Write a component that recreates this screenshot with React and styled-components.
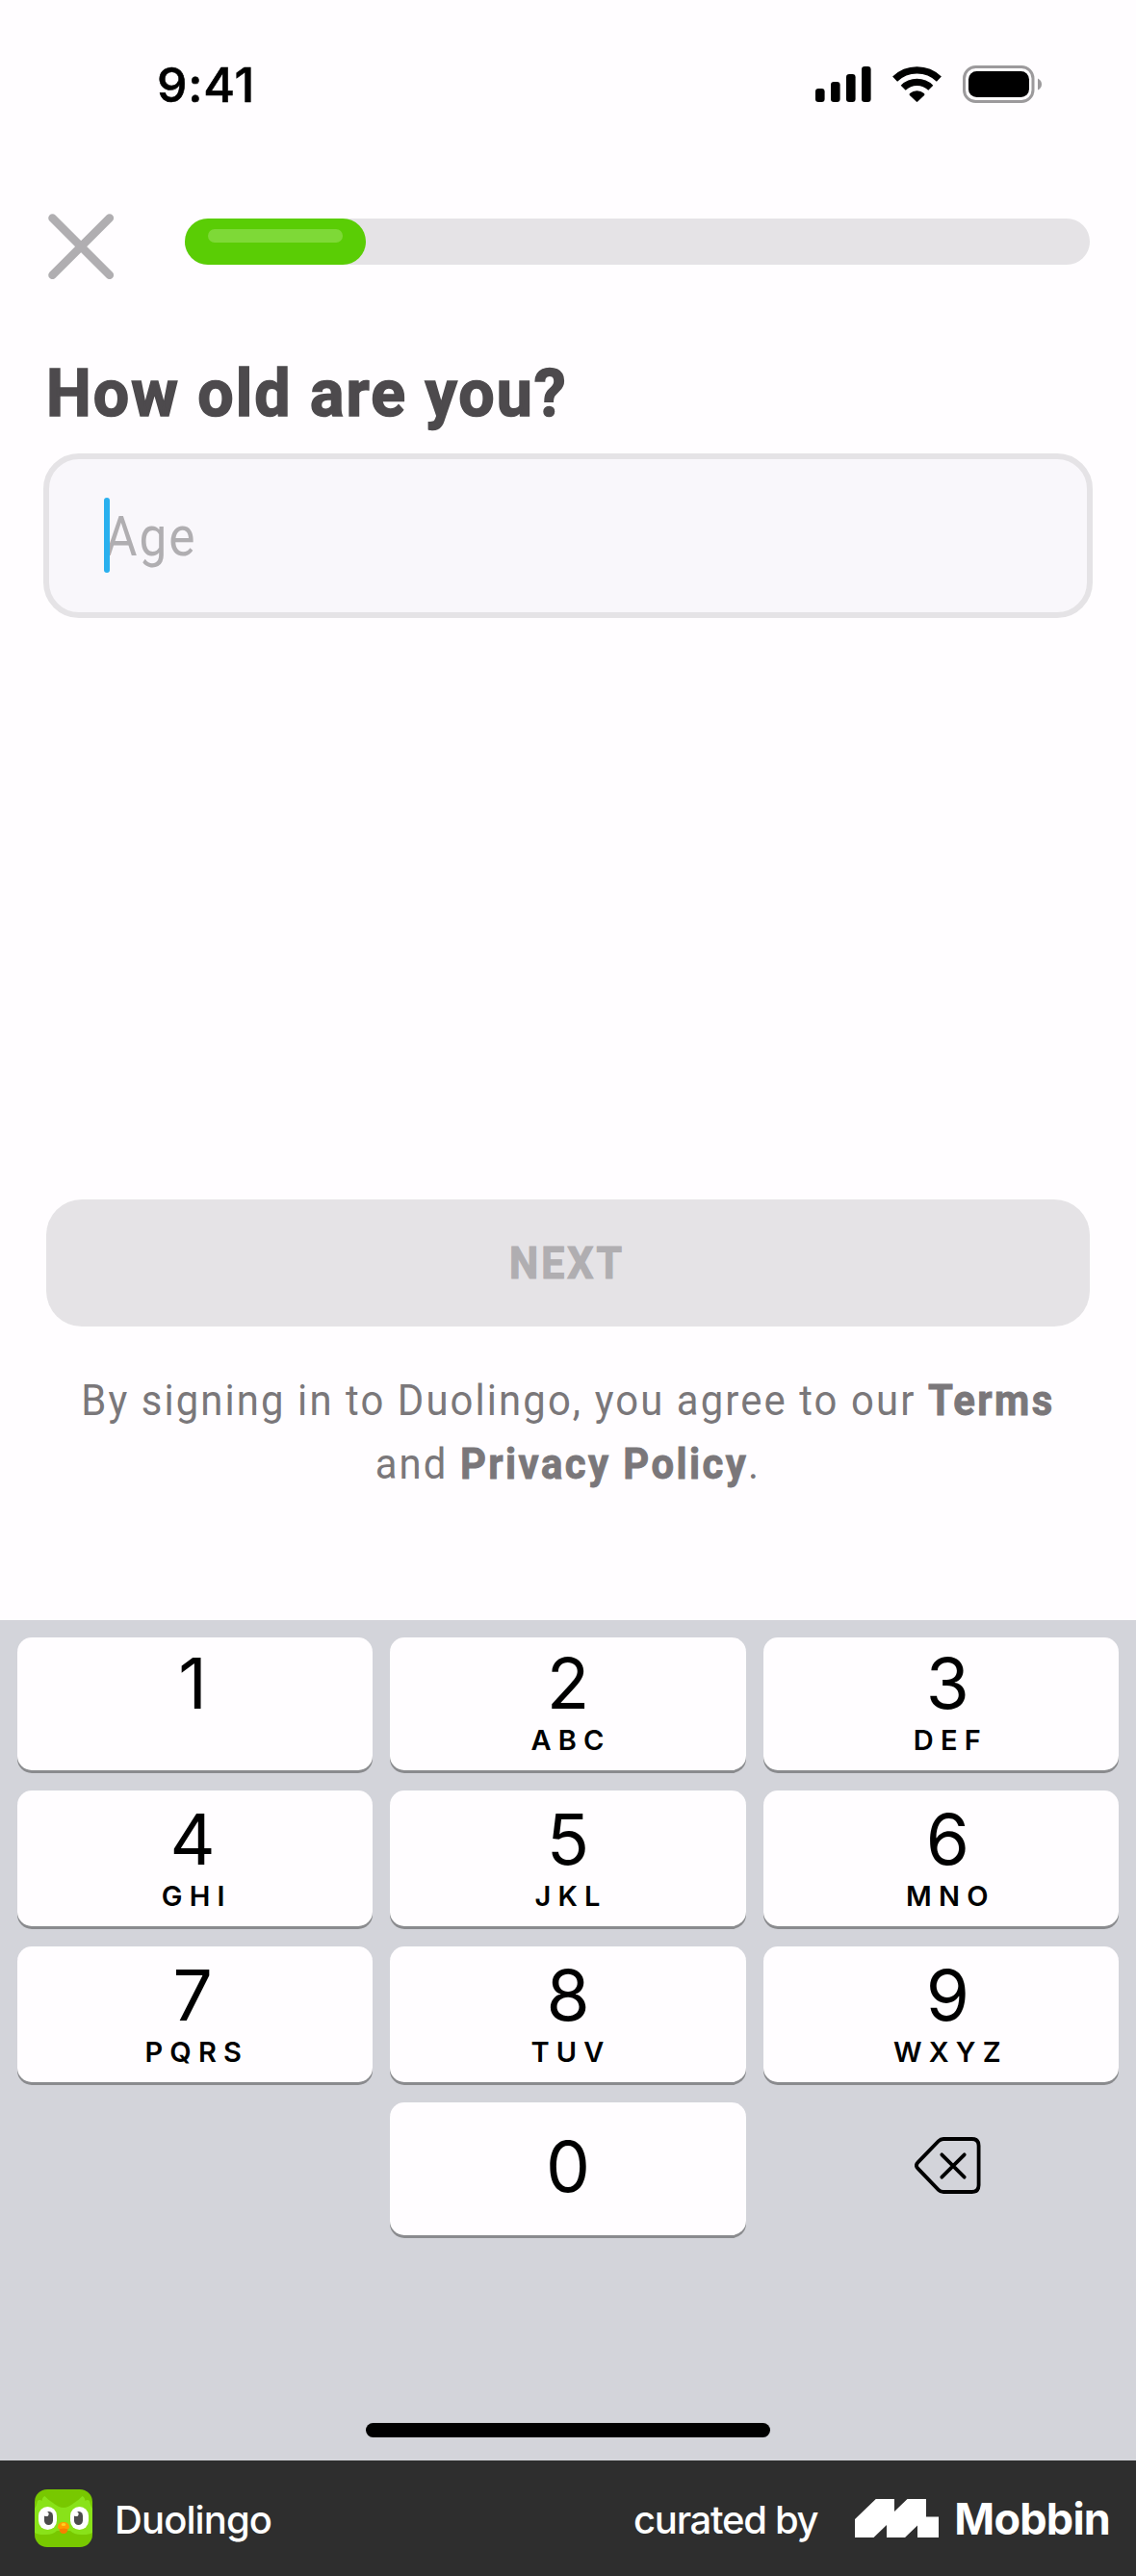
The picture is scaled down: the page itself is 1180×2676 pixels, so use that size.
import React from "react";
import styled, { createGlobalStyle, css } from "styled-components";

const GlobalStyle = createGlobalStyle`
  * { box-sizing: border-box; }
  body { margin: 0; background: #fffdff; }
`;

/* Slightly narrowed, widely tracked face used for all in-app copy */
const narrowed = css`
  font-family: Roboto, sans-serif;
  transform: scaleX(${(p) => p.$stretch || 0.93});
`;

const Page = styled.div`
  width: 1180px;
  height: 2676px;
  display: flex;
  flex-direction: column;
  overflow: hidden;
  background: #fffdff;
  font-family: Inter, sans-serif;
  color: #000;
`;

/* Status bar */
const StatusBar = styled.header`
  height: 222px;
  padding: 58px 98px 0 163px;
  display: flex;
  justify-content: space-between;
  align-items: flex-start;
`;

const Clock = styled.time`
  font-size: 50px;
  font-weight: 500;
  line-height: 60px;
  letter-spacing: 0.8px;
  -webkit-text-stroke: 0.6px #000;
`;

const StatusIcons = styled.div`
  display: flex;
  gap: 22px;
  padding-top: 10px;
`;

/* Progress header */
const ProgressHeader = styled.div`
  height: 146px;
  padding: 0 48px 0 50px;
  display: flex;
  align-items: flex-start;
  gap: 74px;
`;

const IconButton = styled.button`
  display: flex;
  padding: 0;
  border: 0;
  background: none;
`;

const Track = styled.div`
  flex: 1;
  height: 48px;
  margin-top: 5px;
  border-radius: 24px;
  background: #e5e3e6;
`;

const Fill = styled.div`
  width: ${(p) => p.$value}%;
  height: 100%;
  padding: 11px 24px;
  border-radius: 24px;
  background: #5acd05;
`;

const Shine = styled.div`
  height: 14px;
  border-radius: 7px;
  background: #7ed937;
`;

/* Form */
const Form = styled.main`
  flex: 1;
  padding: 0 45px 129px;
  display: flex;
  flex-direction: column;
`;

const Title = styled.h1`
  ${narrowed}
  transform-origin: left;
  margin: 0 3px 22px;
  font-size: 69px;
  font-weight: 700;
  line-height: 81px;
  letter-spacing: 2.1px;
  color: #4d4a4d;
  -webkit-text-stroke: 1.6px #4d4a4d;
`;

const Field = styled.div`
  height: 171px;
  padding: 2px 57px 0;
  display: flex;
  align-items: center;
  border: 6px solid #e5e3e6;
  border-radius: 37px;
  background: #f9f7fb;
`;

const Caret = styled.span`
  position: relative;
  z-index: 1;
  width: 6px;
  height: 78px;
  margin-bottom: 4px;
  border-radius: 3px;
  background: #2ab0ee;
`;

const Placeholder = styled.span`
  ${narrowed}
  transform-origin: left;
  margin-left: -5px;
  font-size: 57px;
  line-height: 67px;
  letter-spacing: 2.2px;
  color: #b0aeb1;
`;

const NextButton = styled.button`
  height: 132px;
  margin: auto 3px 44px;
  padding: 0 2px 0 0;
  border: 0;
  border-radius: 37px;
  background: #e5e3e6;
  color: #b0aeb1;
`;

const ButtonLabel = styled.span`
  ${narrowed}
  display: block;
  font-size: 46px;
  font-weight: 700;
  line-height: 54px;
  letter-spacing: 3.2px;
  -webkit-text-stroke: 1.2px #b0aeb1;
`;

const Legal = styled.p`
  ${narrowed}
  margin: 0 -20px;
  text-align: center;
  font-size: 45px;
  line-height: 66px;
  letter-spacing: 2.25px;
  color: #7a777a;
  white-space: nowrap;
`;

const LegalLink = styled.a`
  font-weight: 700;
  letter-spacing: 2.6px;
  -webkit-text-stroke: 0.9px #7a777a;
`;

/* Keypad */
const Keyboard = styled.section`
  height: 873px;
  padding: 18px 18px 24px;
  display: flex;
  flex-direction: column;
  justify-content: space-between;
  align-items: center;
  background: #d3d4da;
`;

const Keys = styled.div`
  width: 100%;
  display: grid;
  grid-template-columns: repeat(3, 1fr);
  grid-template-rows: 138px 141px 141px 138px;
  column-gap: 18px;
  row-gap: 21px;
`;

const KeyCap = styled.button`
  grid-column: ${(p) => p.$col};
  grid-row: ${(p) => p.$row};
  display: flex;
  flex-direction: column;
  align-items: center;
  justify-content: flex-start;
  padding: ${(p) => [3, 6, 6, 22][p.$row - 1]}px 0 0;
  border: 0;
  border-radius: 15px;
  background: #fffdff;
  box-shadow: 0 3px 0 #8a8b8e;
  color: #000;
  font-family: Inter, sans-serif;
`;

const Digit = styled.span`
  margin-left: ${(p) => [-5, 0, 14][p.$col - 1]}px;
  font-size: 73px;
  font-weight: 400;
  line-height: 89px;
`;

const Letters = styled.span`
  margin: -3px -7.2px 0 ${(p) => [-4, -1, 13][p.$col - 1]}px;
  font-size: 29px;
  font-weight: 600;
  line-height: 35px;
  letter-spacing: 7.2px;
`;

const DeleteKey = styled.button`
  grid-column: 3;
  grid-row: 4;
  display: flex;
  justify-content: center;
  align-items: flex-start;
  padding: 36px 0 0 15px;
  border: 0;
  background: none;
`;

const HomeIndicator = styled.div`
  width: 420px;
  height: 15px;
  border-radius: 8px;
  background: #000;
`;

/* Attribution footer */
const Footer = styled.footer`
  height: 120px;
  padding: 0 27px 0 36px;
  display: flex;
  align-items: center;
  justify-content: space-between;
  background: #2e2e2e;
  color: #fff;
`;

const Brand = styled.div`
  display: flex;
  align-items: center;
  gap: ${(p) => p.$gap}px;
`;

const FooterText = styled.span`
  padding-top: 3px;
  font-size: 40px;
  font-weight: 500;
  line-height: 49px;
  letter-spacing: ${(p) => p.$tracking}px;
`;

const Wordmark = styled.span`
  font-size: 45px;
  font-weight: 700;
  line-height: 55px;
  letter-spacing: -0.8px;
`;

const SignalIcon = () => (
  <svg width="58" height="39" viewBox="0 0 58 39">
    <rect x="0" y="24" width="9.6" height="14" rx="3.2" />
    <rect x="16" y="17" width="9.6" height="21" rx="3.2" />
    <rect x="32" y="9" width="9.6" height="29" rx="3.2" />
    <rect x="48" y="1" width="9.6" height="37" rx="3.2" />
  </svg>
);

const WifiIcon = () => (
  <svg width="51" height="39" viewBox="0 0 51 39">
    <g transform="translate(0 1)">
      <path d="M2.6 13.2A33 33 0 0 1 48.4 13.2M11.2 22.2A20.4 20.4 0 0 1 39.8 22.2" fill="none" stroke="#000" strokeWidth="7.2" />
      <path d="M17.9 30Q17 29 18.1 28.1A11.2 11.2 0 0 1 32.9 28.1Q34 29 33.1 30L26.2 36.6Q25.5 37.3 24.8 36.6Z" />
    </g>
  </svg>
);

const BatteryIcon = () => (
  <svg width="82" height="39" viewBox="0 0 82 39">
    <rect x="1.5" y="1.5" width="71.5" height="36" rx="12" fill="none" stroke="#9c9a9c" strokeWidth="3" />
    <rect x="6" y="6" width="63" height="27" rx="8.5" />
    <path d="M78 13.5Q82 15.5 82 19.5T78 25.5Z" fill="#9c9a9c" />
  </svg>
);

const CloseIcon = () => (
  <svg width="68" height="68" viewBox="0 0 68 68">
    <path d="M4.5 4.5L63.8 63.8M63.8 4.5L4.5 63.8" stroke="#b0aeb1" strokeWidth="8.6" strokeLinecap="round" />
  </svg>
);

const DeleteIcon = () => (
  <svg width="69" height="59" viewBox="0 0 69 59" fill="none" stroke="#000" strokeWidth="3.8" strokeLinecap="round" strokeLinejoin="round">
    <path d="M30 2H59.5Q66.6 2 66.6 9V50Q66.6 57 59.5 57H30Q27 57 24.8 54.8L3.4 32.6Q0.4 29.5 3.4 26.4L24.8 4.2Q27 2 30 2Z" />
    <path d="M28.3 18.3L51.7 41.7M51.7 18.3L28.3 41.7" />
  </svg>
);

const OwlIcon = () => (
  <svg width="60" height="60" viewBox="0 0 60 60">
    <defs>
      <clipPath id="tile">
        <rect width="60" height="60" rx="13" />
      </clipPath>
    </defs>
    <g clipPath="url(#tile)">
      <rect width="60" height="60" fill="#78c800" />
      <path d="M0 20Q2 17 3 12Q5 10 7.5 12Q8 8 10.5 7Q14 11 19 14Q25 19 30 19Q35 19 41 14Q46 11 49.5 7Q52 8 52.5 12Q55 10 57 12Q58 17 60 20V45Q56 47.5 48 47Q41 47 37 43H23Q19 47 12 47Q4 47.5 0 45Z" fill="#89e219" />
      <rect x="4" y="18" width="19" height="24" rx="9.5" fill="#fff" />
      <rect x="37" y="18" width="19" height="24" rx="9.5" fill="#fff" />
      <rect x="10" y="23" width="9" height="14" rx="4.5" fill="#4b4b4b" />
      <rect x="41" y="23" width="9" height="14" rx="4.5" fill="#4b4b4b" />
      <circle cx="12" cy="25.5" r="2.6" fill="#fff" />
      <circle cx="43" cy="25.5" r="2.6" fill="#fff" />
      <path d="M25.5 40H34.5Q34.5 46 30 46T25.5 40Z" fill="#f77f00" />
      <path d="M24 39.5Q24 34 30 34T36 39.5Q36 41.5 33 41Q30 40 27 41Q24 41.5 24 39.5Z" fill="#ff9c00" />
      <ellipse cx="30" cy="36.5" rx="2.3" ry="1.5" fill="#ffd21f" />
    </g>
  </svg>
);

const MobbinIcon = () => (
  <svg width="87" height="40" viewBox="0 0 87 40">
    <path d="M0 21L21.8 0H41V13L54.5 0H74V18.5H87V40H65V27.5L52 40H33V27L19.5 40H0Z" fill="#fff" />
  </svg>
);

const KEYS = [
  ["1", ""], ["2", "ABC"], ["3", "DEF"],
  ["4", "GHI"], ["5", "JKL"], ["6", "MNO"],
  ["7", "PQRS"], ["8", "TUV"], ["9", "WXYZ"],
];

const Key = ({ digit, letters, col, row }) => (
  <KeyCap $col={col} $row={row}>
    <Digit $col={col}>{digit}</Digit>
    {letters && <Letters $col={col}>{letters}</Letters>}
  </KeyCap>
);

export default function App() {
  return (
    <>
      <GlobalStyle />
      <Page>
        <StatusBar>
          <Clock>9:41</Clock>
          <StatusIcons>
            <SignalIcon />
            <WifiIcon />
            <BatteryIcon />
          </StatusIcons>
        </StatusBar>

        <ProgressHeader>
          <IconButton aria-label="Close">
            <CloseIcon />
          </IconButton>
          <Track>
            <Fill $value={20}>
              <Shine />
            </Fill>
          </Track>
        </ProgressHeader>

        <Form>
          <Title $stretch={0.96}>How old are you?</Title>
          <Field>
            <Caret />
            <Placeholder $stretch={0.9}>Age</Placeholder>
          </Field>
          <NextButton>
            <ButtonLabel>NEXT</ButtonLabel>
          </NextButton>
          <Legal>
            By signing in to Duolingo, you agree to our <LegalLink>Terms</LegalLink>
            <br />
            and <LegalLink>Privacy Policy</LegalLink>.
          </Legal>
        </Form>

        <Keyboard>
          <Keys>
            {KEYS.map(([digit, letters], i) => (
              <Key key={digit} digit={digit} letters={letters} col={(i % 3) + 1} row={Math.floor(i / 3) + 1} />
            ))}
            <Key digit="0" col={2} row={4} />
            <DeleteKey aria-label="Delete">
              <DeleteIcon />
            </DeleteKey>
          </Keys>
          <HomeIndicator />
        </Keyboard>

        <Footer>
          <Brand $gap={23}>
            <OwlIcon />
            <FooterText $tracking={-0.9}>Duolingo</FooterText>
          </Brand>
          <Brand $gap={39}>
            <FooterText $tracking={-1.3}>curated by</FooterText>
            <Brand $gap={16}>
              <MobbinIcon />
              <Wordmark>Mobbin</Wordmark>
            </Brand>
          </Brand>
        </Footer>
      </Page>
    </>
  );
}
